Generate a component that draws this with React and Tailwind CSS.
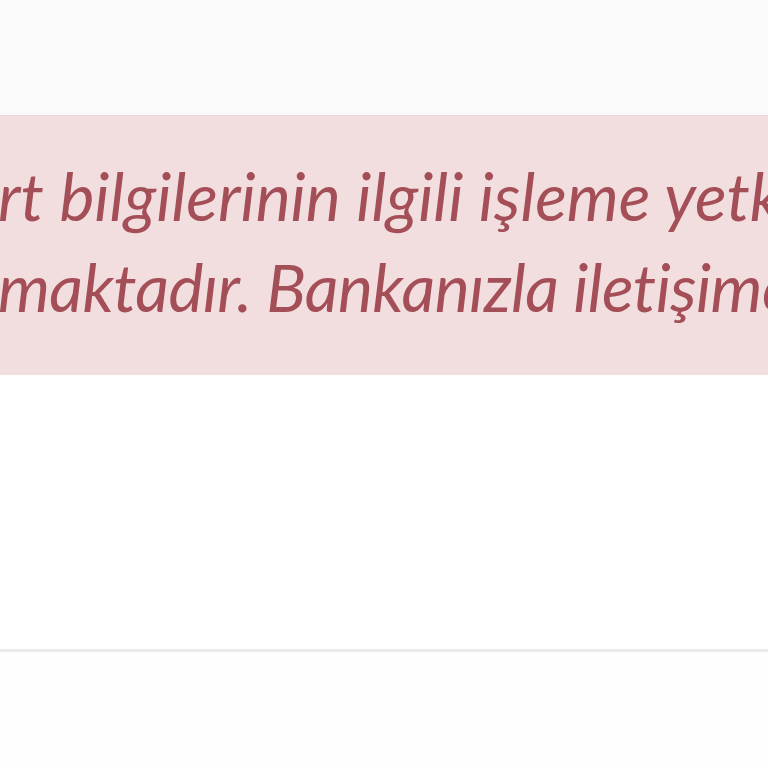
export default function App() {
  return (
    <div className="w-[768px] h-[768px] overflow-hidden bg-white flex flex-col" style={{ fontFamily: "Lato, 'Open Sans', sans-serif" }}>
      <div className="h-[115px] bg-[#fafafb]" />
      <div className="h-[260px] bg-[#f2dede] border-t border-[#ecd6d8] pt-[33px] overflow-hidden">
        <div className="ml-[-2px] whitespace-nowrap italic text-[66px] leading-[93px] text-[#a44f58] [font-variant-ligatures:none]">
          <p>rt bilgilerinin ilgili işleme yetkisi bulunmamaktadır.</p>
          <p className="mt-[-2px] tracking-[-0.6px]">maktadır. Bankanızla iletişime geçiniz.</p>
        </div>
      </div>
      <div className="h-[274px] bg-white" />
      <div className="h-[3px] bg-[#ebebeb]" />
      <div className="flex-1 bg-[#fefefe]" />
    </div>
  )
}
